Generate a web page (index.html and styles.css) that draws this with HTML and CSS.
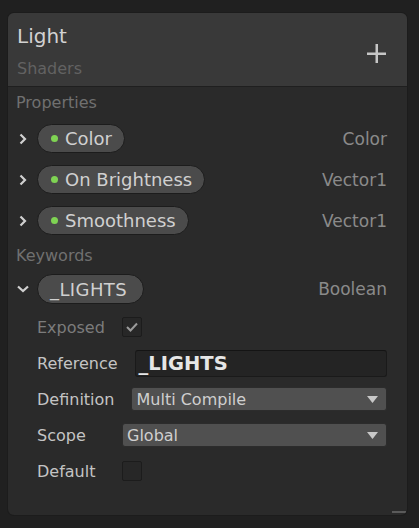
FILE: index.html
```html
<!DOCTYPE html>
<html>
<head>
<meta charset="utf-8">
<link rel="stylesheet" href="styles.css">
</head>
<body>
<div class="panel">
  <div class="header">
    <div class="titles">
      <div class="title">Light</div>
      <div class="subtitle">Shaders</div>
    </div>
    <svg class="plus" width="19" height="19" viewBox="0 0 19 19"><rect x="8.5" y="0" width="2.5" height="19" fill="#c6c6c6"/><rect x="0" y="8.5" width="19" height="2.5" fill="#c6c6c6"/></svg>
  </div>
  <div class="body">
    <div class="section-label">Properties</div>
    <div class="prop-row">
      <span class="arrow"><svg width="8" height="12" viewBox="0 0 8 12"><path d="M1.5 1.5 L6 6 L1.5 10.5" fill="none" stroke="#d0d0d0" stroke-width="2.2"/></svg></span>
      <span class="pill"><span class="dot"></span>Color</span>
      <span class="type">Color</span>
    </div>
    <div class="prop-row">
      <span class="arrow"><svg width="8" height="12" viewBox="0 0 8 12"><path d="M1.5 1.5 L6 6 L1.5 10.5" fill="none" stroke="#d0d0d0" stroke-width="2.2"/></svg></span>
      <span class="pill"><span class="dot"></span>On Brightness</span>
      <span class="type">Vector1</span>
    </div>
    <div class="prop-row">
      <span class="arrow"><svg width="8" height="12" viewBox="0 0 8 12"><path d="M1.5 1.5 L6 6 L1.5 10.5" fill="none" stroke="#d0d0d0" stroke-width="2.2"/></svg></span>
      <span class="pill"><span class="dot"></span>Smoothness</span>
      <span class="type">Vector1</span>
    </div>
    <div class="section-label kw">Keywords</div>
    <div class="prop-row kw-row">
      <span class="arrow"><svg width="12" height="8" viewBox="0 0 12 8"><path d="M1 1.5 L6 6 L11 1.5" fill="none" stroke="#d0d0d0" stroke-width="2.2"/></svg></span>
      <span class="pill pill-kw">_LIGHTS</span>
      <span class="type">Boolean</span>
    </div>
    <div class="sub">
      <div class="field">
        <span class="label dim">Exposed</span>
        <span class="check"><svg width="14" height="12" viewBox="0 0 14 12"><path d="M2 6 L5.5 9.5 L12 2.5" fill="none" stroke="#9a9a9a" stroke-width="2"/></svg></span>
      </div>
      <div class="field">
        <span class="label">Reference</span>
        <span class="input">_LIGHTS</span>
      </div>
      <div class="field">
        <span class="label">Definition</span>
        <span class="select">Multi Compile<svg class="tri" width="11" height="7" viewBox="0 0 11 7"><path d="M0 0 H11 L5.5 7 Z" fill="#c8c8c8"/></svg></span>
      </div>
      <div class="field">
        <span class="label">Scope</span>
        <span class="select">Global<svg class="tri" width="11" height="7" viewBox="0 0 11 7"><path d="M0 0 H11 L5.5 7 Z" fill="#c8c8c8"/></svg></span>
      </div>
      <div class="field">
        <span class="label">Default</span>
        <span class="check"></span>
      </div>
    </div>
  </div>
  <div class="resize"></div>
</div>
</body>
</html>
```

FILE: styles.css
```css
* { box-sizing: border-box; }
html, body { margin: 0; padding: 0; }
body {
  width: 419px;
  height: 528px;
  background: #202020;
  font-family: "DejaVu Sans", Verdana, sans-serif;
  padding: 13px 12px 13px 8px;
  overflow: hidden;
}
.panel {
  position: relative;
  height: 502px;
  background: #2a2a2a;
  border-radius: 6px;
  overflow: hidden;
  display: flex;
  flex-direction: column;
  box-shadow: 0 0 0 1px #1c1c1c;
}
.header {
  height: 74px;
  background: #393939;
  border-bottom: 1px solid #1f1f1f;
  display: flex;
  align-items: flex-start;
  justify-content: space-between;
  padding: 11px 20px 0 9px;
}
.title {
  font-size: 20px;
  line-height: 24px;
  color: #d2d2d2;
}
.subtitle {
  font-size: 16px;
  line-height: 20px;
  color: #626262;
  margin-top: 11px;
}
.plus {
  margin-top: 20px;
  margin-right: 1px;
}
.body {
  flex: 1;
  padding: 6px 20px 0 8px;
}
.section-label {
  font-size: 16px;
  line-height: 20px;
  color: #707070;
  margin-bottom: 5px;
}
.section-label.kw {
  margin-top: 5px;
  margin-bottom: 3px;
}
.prop-row {
  height: 41px;
  display: flex;
  align-items: center;
}
.kw-row { height: 40px; }
.arrow {
  width: 14px;
  margin-right: 7px;
  display: flex;
  justify-content: center;
  align-items: center;
}
.arrow svg { display: block; }
.pill {
  height: 29px;
  display: inline-flex;
  align-items: center;
  padding: 0 12px 0 13px;
  border-radius: 15px;
  background: #4b4b4b;
  border: 1px solid #1c1c1c;
  font-size: 18px;
  color: #d0d0d0;
  white-space: nowrap;
}
.pill-kw { padding: 0 16px 0 12px; height: 30px; letter-spacing: 0.4px; }
.dot {
  width: 7px;
  height: 7px;
  border-radius: 50%;
  background: #7fd353;
  margin-right: 7px;
}
.type {
  margin-left: auto;
  font-size: 17px;
  color: #8a8a8a;
}
.sub { padding-left: 21px; }
.field {
  height: 36px;
  display: flex;
  align-items: center;
}
.label {
  min-width: 85px;
  padding-right: 17px;
  font-size: 16px;
  color: #c4c4c4;
  white-space: nowrap;
}
.label.dim { color: #7c7c7c; }
.check {
  width: 20px;
  height: 20px;
  border: 1px solid #1c1c1c;
  background: #272727;
  border-radius: 2px;
  display: flex;
  align-items: center;
  justify-content: center;
}
.input {
  flex: 1;
  height: 27px;
  background: #242424;
  border: 1px solid #1a1a1a;
  border-top-color: #141414;
  border-radius: 3px;
  font-size: 19.5px;
  font-weight: bold;
  color: #e6e6e6;
  padding-left: 3px;
  display: flex;
  align-items: center;
}
.select {
  flex: 1;
  height: 24px;
  background: #505050;
  border: 1px solid #2c2c2c;
  border-radius: 3px;
  font-size: 16px;
  color: #cfcfcf;
  padding: 0 8px 0 4px;
  display: flex;
  align-items: center;
  justify-content: space-between;
}
.tri { display: block; }
.resize {
  position: absolute;
  right: 1px;
  bottom: 2px;
  width: 14px;
  height: 2px;
  background: #5a5a5a;
}
```
